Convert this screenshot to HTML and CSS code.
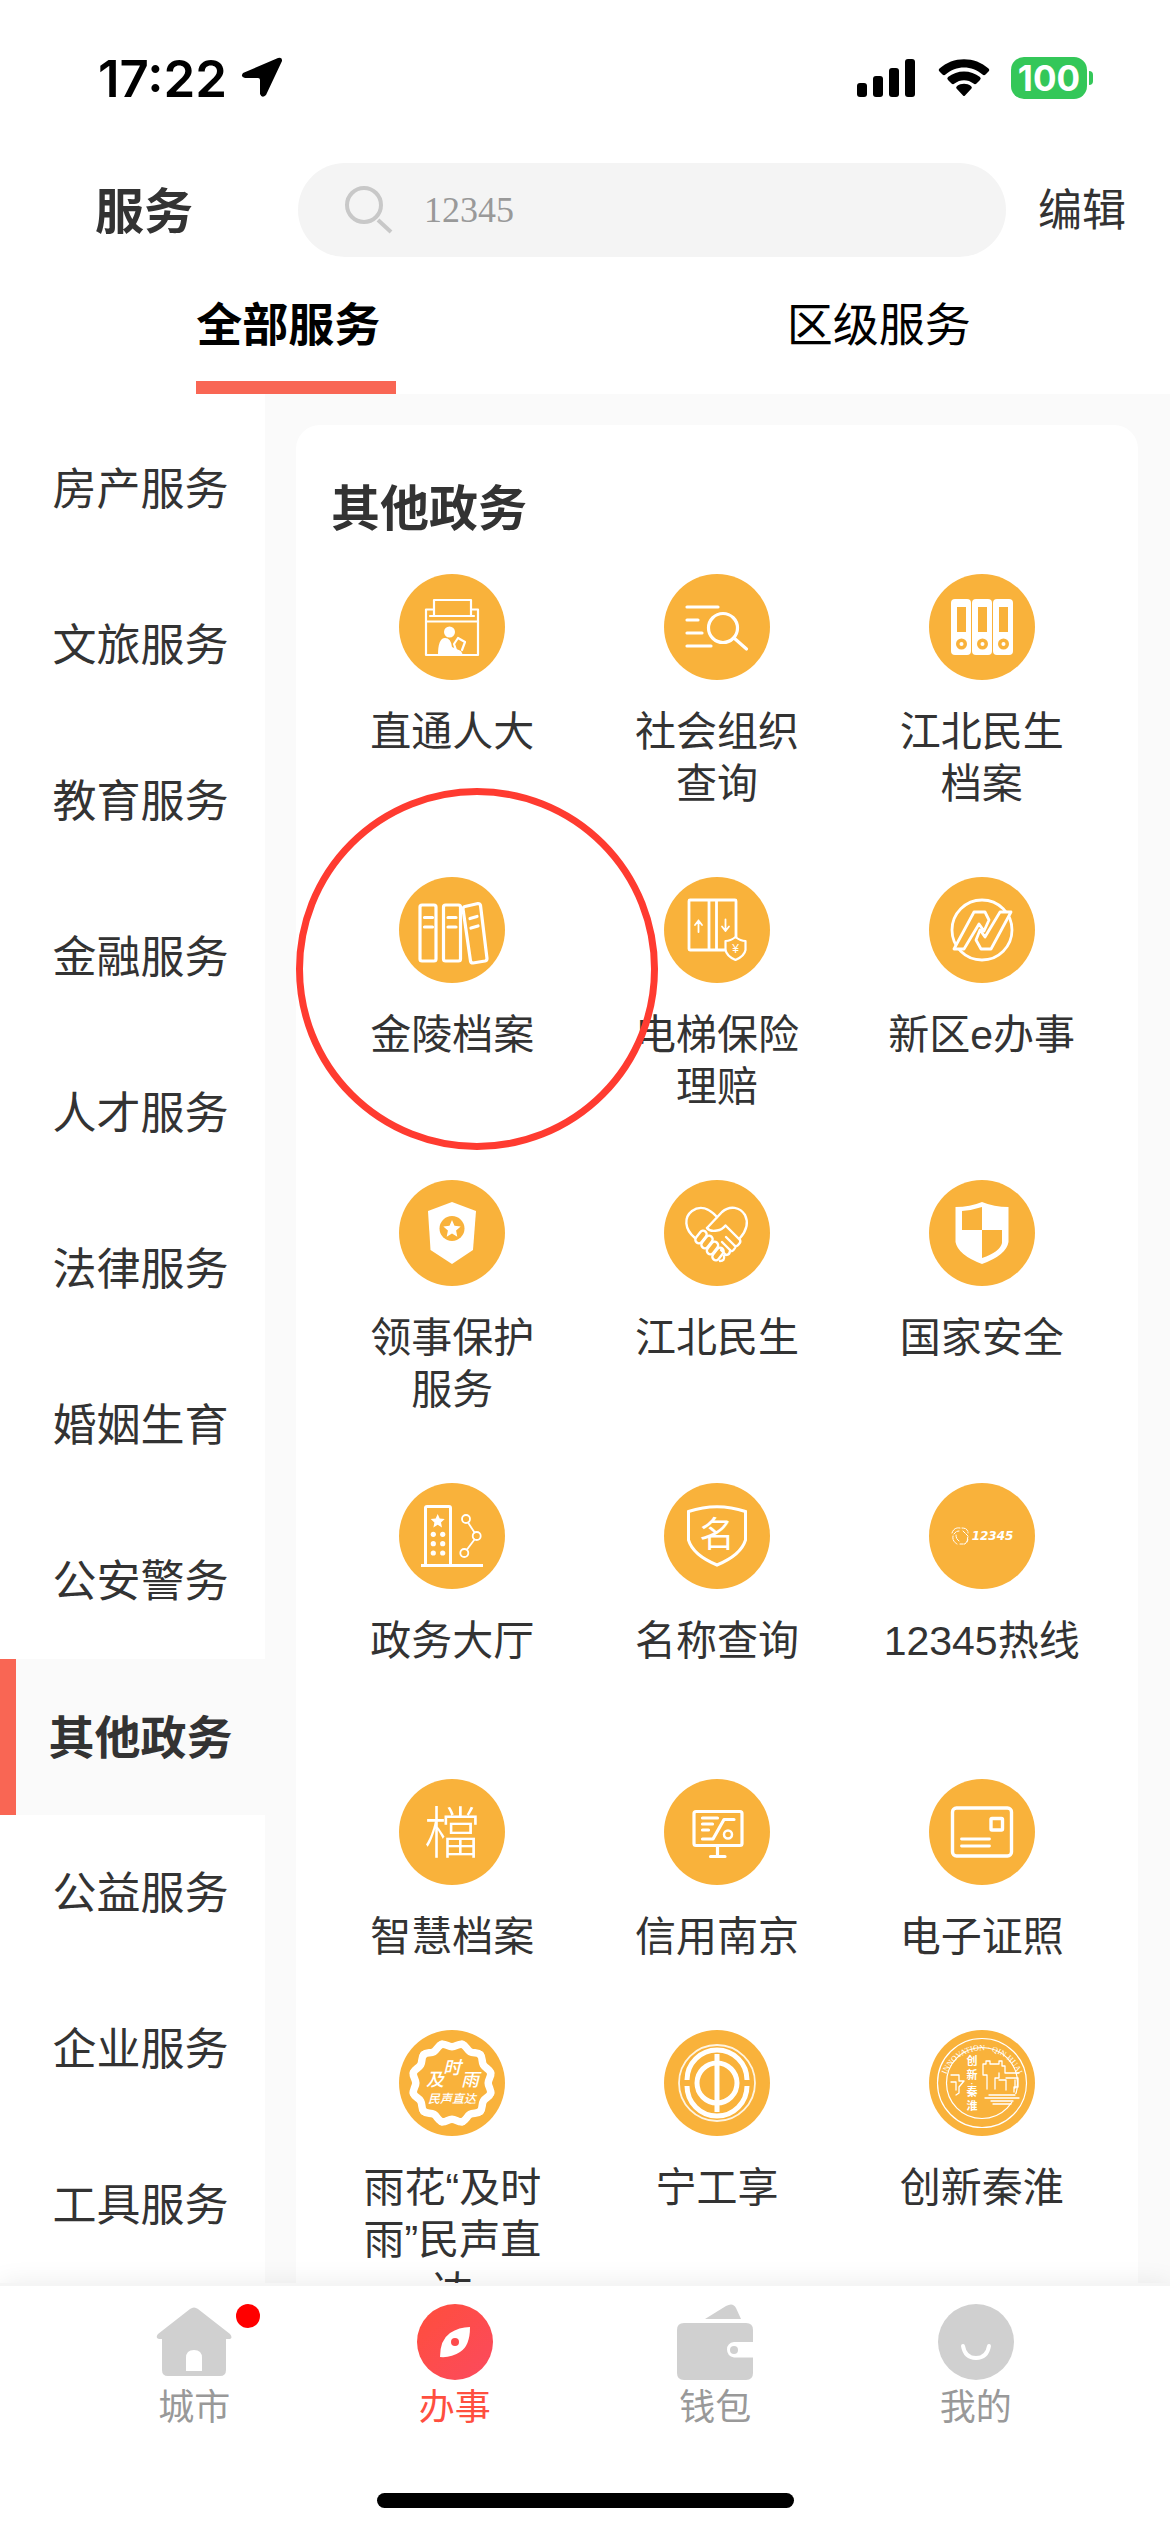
FILE: index.html
```html
<!DOCTYPE html>
<html lang="zh-CN">
<head>
<meta charset="UTF-8">
<meta name="viewport" content="width=device-width, initial-scale=1">
<title>服务</title>
<link rel="stylesheet" href="styles.css">
</head>
<body>

<div class="statusbar">
	<span class="time">17:22</span>
	<svg class="location" width="42" height="42" viewBox="0 0 42 42"><path d="M37 1Q41.500-.5 41 4L25 38Q21 42 19 37V23Q19 21 17 21H4Q-1 20 2 16z"/></svg>
	<div class="indicators">
		<svg width="60" height="38" viewBox="0 0 60 38"><rect y="24" width="10" height="14" rx="3"/><rect x="16" y="17" width="10" height="21" rx="3"/><rect x="32" y="9" width="10" height="29" rx="3"/><rect x="48" width="10" height="38" rx="3"/></svg>
		<svg width="52" height="38" viewBox="0 0 52 38"><path d="M1.500 12.500Q0 11 1.500 9.500C15-3 37-3 50.500 9.500Q52 11 50.500 12.500L47.500 15.500Q46 17 44.500 15.500C34 6 18 6 7.500 15.500Q6 17 4.500 15.500z"/><path d="M10 21Q8.500 19.500 10 18C19 10.500 33 10.500 42 18Q43.500 19.500 42 21L38.500 24.500Q37 26 35.500 24.500C30 20 22 20 16.500 24.500Q15 26 13.500 24.500z"/><path d="M18.500 29.500Q17.500 28.500 19 27C23 24 29 24 33 27Q34.500 28.500 33.500 29.500L27 36.500Q26 37.500 25 36.500z"/></svg>
		<div class="battery"><span>100</span></div>
	</div>
</div>

<header class="header">
	<h1>服务</h1>
	<label class="search">
		<svg width="50" height="50" viewBox="0 0 50 50"><circle cx="20" cy="20" r="17"/><path d="M34 35L47 47"/></svg>
		<input type="text" placeholder="12345" aria-label="搜索">
	</label>
	<button type="button" class="edit">编辑</button>
</header>

<nav class="tabs">
	<div><button type="button" class="active">全部服务</button></div>
	<div><button type="button">区级服务</button></div>
</nav>

<div class="content">
	<nav class="sidebar">
		<a href="#">房产服务</a>
		<a href="#">文旅服务</a>
		<a href="#">教育服务</a>
		<a href="#">金融服务</a>
		<a href="#">人才服务</a>
		<a href="#">法律服务</a>
		<a href="#">婚姻生育</a>
		<a href="#">公安警务</a>
		<a href="#" class="active">其他政务</a>
		<a href="#">公益服务</a>
		<a href="#">企业服务</a>
		<a href="#">工具服务</a>
	</nav>

	<main class="card">
		<h2>其他政务</h2>
		<div class="services">

			<a href="#" class="service">
				<svg viewBox="0 0 106 106"><g stroke-width="2.200"><path d="M35 42V26h37v16M31 42h44M34 35.500h-7V81h52V35.500h-7M27 47.500h52"/><path d="M57 76l-2-6 4-6 7 4-3 8"/></g><g class="solid"><circle cx="50.500" cy="58" r="5.500"/><path d="M39 81q0-17 7-17 6 0 7 9l9 4 2 4z"/></g></svg>
				<span>直通人大</span>
			</a>
			<a href="#" class="service">
				<svg viewBox="0 0 106 106"><g stroke-width="3.200"><path d="M23 33h31M23 46h11M23 59h15M23 72h24"/><circle cx="59" cy="54" r="14.500"/><path d="M70 64l12.500 11"/></g></svg>
				<span>社会组织查询</span>
			</a>
			<a href="#" class="service">
				<svg viewBox="0 0 106 106"><g class="solid"><rect x="22" y="25" width="20" height="56" rx="4"/><rect x="43" y="25" width="20" height="56" rx="4"/><rect x="64" y="25" width="20" height="56" rx="4"/></g><g class="hole"><path d="M28 33h9v25h-9zM49 33h9v25h-9zM70 33h9v25h-9z"/><circle cx="32.500" cy="70" r="5.500"/><circle cx="53.500" cy="70" r="5.500"/><circle cx="74.500" cy="70" r="5.500"/></g><g class="solid"><circle cx="32.500" cy="70" r="2"/><circle cx="53.500" cy="70" r="2"/><circle cx="74.500" cy="70" r="2"/></g></svg>
				<span>江北民生档案</span>
			</a>

			<a href="#" class="service marked">
				<svg viewBox="0 0 106 106"><g stroke-width="3.200"><rect x="21" y="28" width="16" height="56" rx="2"/><rect x="44.500" y="28" width="17" height="56" rx="2"/><path d="M66 29.500l13-3q2 0 2.500 2l6.500 53q0 2-2 2.500l-12 2q-2 0-2.500-2L64 32q0-2 2-2.500z"/><path d="M25.500 40.500h8M25.500 50h8M49 40.500h8M49 50h8M71 41.500l7-2M72 51l7-2"/></g></svg>
				<span>金陵档案</span>
			</a>
			<a href="#" class="service">
				<svg viewBox="0 0 106 106"><g stroke-width="2.800"><path d="M61 73H26q-1 0-1-1V24q0-1 1-1h45q1 0 1 1v36M45 23v50M52.500 23v50"/></g><g stroke-width="1.800"><path d="M34.500 55V43.500M31 48l3.500-4.500L38 48M61.500 42.500V54M58 49.500l3.500 4.500 3.500-4.500"/></g><path stroke-width="2.200" d="M71.500 60q5 4 10 4v9q-1 6-10 10-9-4-10-10v-9q5 0 10-4z"/><text x="71.500" y="76" font-size="12">¥</text></svg>
				<span>电梯保险理赔</span>
			</a>
			<a href="#" class="service">
				<svg viewBox="0 0 106 106"><g stroke-width="2.800"><circle cx="53" cy="53" r="30"/></g><path class="hole" d="M25 72L45 35h10l27 0-20 37z"/><g stroke-width="2.800"><path d="M25 72L45 35h11l4 8-5 11-5-7L35 72zM82 35L62 72H52l-5-9 4-10 5 7L71 35z"/></g></svg>
				<span>新区e办事</span>
			</a>

			<a href="#" class="service">
				<svg viewBox="0 0 106 106"><path class="solid" d="M53 22l24 9-3 39-21 14-21.500-14L29 31z"/><circle class="hole" cx="53" cy="48.500" r="12.500"/><path class="solid" d="M53 40l2.500 5.700 6.200.7-4.600 4.200 1.200 6.100-5.300-3.100-5.300 3.100 1.200-6.100-4.600-4.200 6.200-.7z"/></svg>
				<span>领事保护服务</span>
			</a>
			<a href="#" class="service">
				<svg viewBox="0 0 106 106"><g stroke-width="2.400"><path d="M31 58C20 49 20 37 28 31C36 25 45 28 53 37"/><path d="M43 48L58 32C66 25 76 27 81 35C85 43 83 50 76 58"/><path d="M43 48Q46 52 53 50.500Q58 50 61.500 45.500L76 60"/><rect x="-7" y="-3.500" width="14" height="7" rx="3.500" transform="translate(37 57) rotate(-52)"/><rect x="-7" y="-3.500" width="14" height="7" rx="3.500" transform="translate(43 62) rotate(-52)"/><rect x="-7" y="-3.500" width="14" height="7" rx="3.500" transform="translate(48.500 68) rotate(-52)"/><rect x="-7" y="-3.500" width="14" height="7" rx="3.500" transform="translate(54 74) rotate(-52)"/><path d="M62 57l8 8q2 3 5-1 2-2 1-4M58 62l8 8q2 3 5-2M57 70l5 5q4 0 4-5M60 76q1 5-4 5"/></g></svg>
				<span>江北民生</span>
			</a>
			<a href="#" class="service">
				<svg viewBox="0 0 106 106"><path class="solid" d="M53 22q12 5 26.500 5v35q-2 13-26.500 22Q29 75 26.500 62V27Q41 27 53 22z"/><path class="hole" d="M53 27v23H33V31q11-1 20-4zM53 50h20v13q-2 9-20 15z"/></svg>
				<span>国家安全</span>
			</a>

			<a href="#" class="service spaced">
				<svg viewBox="0 0 106 106"><g stroke-width="3"><path d="M26.500 82V25q0-1.500 1.500-1.500h22q1.500 0 1.500 1.500v57"/><path stroke-linecap="butt" d="M22 82.500h62"/></g><g stroke-width="1.800"><circle cx="67" cy="36" r="4"/><circle cx="77.700" cy="53" r="4"/><circle cx="65.300" cy="70" r="4"/><path d="M69 39.500l6.500 10M75.500 56.500L68 66.500"/></g><g class="solid"><path d="M38.700 31l2 4.500 5 .5-3.700 3.400 1 5-4.300-2.600-4.300 2.600 1-5-3.700-3.400 5-.5z"/><circle cx="34.300" cy="51.300" r="2.600"/><circle cx="43.700" cy="51.300" r="2.600"/><circle cx="34.300" cy="60.700" r="2.600"/><circle cx="43.700" cy="60.700" r="2.600"/><circle cx="34.300" cy="70" r="2.600"/><circle cx="43.700" cy="70" r="2.600"/></g></svg>
				<span>政务大厅</span>
			</a>
			<a href="#" class="service spaced">
				<svg viewBox="0 0 106 106"><path stroke-width="3" stroke-linejoin="miter" d="M24.500 28.500Q53 19 81.500 28.500V57Q77 72 53 82Q29 72 24.500 57z"/><text x="53" y="64" font-size="35">名</text></svg>
				<span>名称查询</span>
			</a>
			<a href="#" class="service spaced">
				<svg viewBox="0 0 106 106"><g stroke-width="1" stroke-dasharray="3 1"><path d="M23 50q2-6 8-5M25 51q2-3 5-3M33 45q6 0 6 5M34 48l5 5-1 6M24 53q-1 5 4 8M27 52q0 4 3 6M31 61h5l3-4"/></g><text x="63.500" y="57" font-size="12" class="logotype">12345</text></svg>
				<span>12345热线</span>
			</a>

			<a href="#" class="service">
				<svg viewBox="0 0 106 106"><text x="53" y="74" font-size="56" class="seal">檔</text></svg>
				<span>智慧档案</span>
			</a>
			<a href="#" class="service">
				<svg viewBox="0 0 106 106"><g stroke-width="3.200"><rect x="30" y="32.500" width="48" height="34" rx="2"/><path d="M53.500 67v10M46.500 77.500h14.500M38.500 39h15M38.500 45h10M38.500 51h6M38.500 60H49L60 40.500h10"/><circle cx="64" cy="55.500" r="4" stroke-width="2.500"/></g></svg>
				<span>信用南京</span>
			</a>
			<a href="#" class="service">
				<svg viewBox="0 0 106 106"><g stroke-width="3.400"><rect x="23.500" y="29" width="59" height="48" rx="4"/><rect x="62" y="39.500" width="11.500" height="11.500" rx="1"/><path stroke-width="2.800" d="M32.500 60h28M32.500 67h28"/></g></svg>
				<span>电子证照</span>
			</a>

			<a href="#" class="service">
				<svg viewBox="0 0 106 106">
					<defs><path id="wave" d="M-10.400-38.600C-6.500-39.600-4-36.200 0-36.200S6.500-39.600 10.400-38.600"/></defs>
					<g stroke-width="7.500" transform="translate(53 53)"><use href="#wave"/><use href="#wave" transform="rotate(30)"/><use href="#wave" transform="rotate(60)"/><use href="#wave" transform="rotate(90)"/><use href="#wave" transform="rotate(120)"/><use href="#wave" transform="rotate(150)"/><use href="#wave" transform="rotate(180)"/><use href="#wave" transform="rotate(210)"/><use href="#wave" transform="rotate(240)"/><use href="#wave" transform="rotate(270)"/><use href="#wave" transform="rotate(300)"/><use href="#wave" transform="rotate(330)"/></g>
					<g class="brush"><text x="36" y="56" font-size="18">及</text><text x="53" y="44" font-size="18">时</text><text x="71" y="56" font-size="18">雨</text><text x="53" y="73" font-size="12">民声直达</text></g>
				</svg>
				<span>雨花“及时雨”民声直达</span>
			</a>
			<a href="#" class="service">
				<svg viewBox="0 0 106 106"><g stroke-linecap="butt"><circle cx="53" cy="53" r="38" stroke-width="1.800" opacity=".85"/><path stroke-width="5" d="M23 50A30 30 0 0 1 83 50M23 56A30 30 0 0 0 83 56"/><circle cx="53" cy="53" r="20" stroke-width="5"/><path stroke-width="5" d="M53 24v58"/></g></svg>
				<span>宁工享</span>
			</a>
			<a href="#" class="service">
				<svg viewBox="0 0 106 106">
					<defs><path id="arc" d="M14.700 56A38.500 38.500 0 0 1 91.500 56"/></defs>
					<g stroke-width="1.200"><circle cx="53" cy="53" r="44.500"/><circle cx="53" cy="53" r="35.500"/></g>
					<text class="motto" font-size="8"><textPath href="#arc" startOffset="50%">INNOVATION · QIN HUAI</textPath></text>
					<rect class="hole" x="36" y="24" width="14" height="58"/><path class="hole" d="M57 64h34v8H57z"/>
					<g stroke-width="1.300"><path d="M58 59V45h-4V34h3v-3h4v3h9v-3h3v5h3v7h14M70 43v5h-4v11M77 60V50h-7M77 48h12v9h-4v5M86 50v8M22 45h8v6h5l-5 6v6l-3 2M22 52h5v8M56 68h34M60 65h26M62 71h22M64 74h18"/></g>
					<g class="brush-upright"><text x="43" y="35" font-size="11">创</text><text x="43" y="49" font-size="11">新</text><text x="43" y="56" font-size="8">·</text><text x="43" y="66" font-size="11">秦</text><text x="43" y="80" font-size="11">淮</text></g>
				</svg>
				<span>创新秦淮</span>
			</a>

		</div>
	</main>
</div>

<footer class="tabbar">
	<nav>
		<a href="#">
			<svg width="76" height="76" viewBox="0 0 76 76"><path d="M34 5q4-3 8 0l32 25q3 4 0 5h-4v31q0 6-6 6H12q-6 0-6-6V35H3q-4-1-1-5z"/><path class="cut" d="M30 67V54q0-8 8-8t8 8v13z"/></svg>
			<span>城市</span>
			<i class="dot"></i>
		</a>
		<a href="#" class="active">
			<svg width="76" height="76" viewBox="0 0 76 76"><defs><linearGradient id="red" x1="0" y1="0" x2="1" y2="1"><stop offset="0" stop-color="#ff4e3c"/><stop offset="1" stop-color="#fb4a5e"/></linearGradient></defs><circle cx="38" cy="38" r="38" fill="url(#red)"/><path class="cut" d="M53 23Q53 42 43 48Q34 54 23 53Q23 36 33 29Q42 23 53 23z"/><circle cx="38" cy="38" r="4" fill="#fd4b4c"/></svg>
			<span>办事</span>
		</a>
		<a href="#">
			<svg width="76" height="76" viewBox="0 0 76 76"><path d="M28 15L49 2q7-4 10 2l5 11zM7 19h62q7 0 7 7v43q0 7-7 7H7q-7 0-7-7V26q0-7 7-7z"/><path class="cut" d="M76 38H57q-7 1-7 7.500t7 8h19z"/><circle cx="57" cy="46" r="4"/></svg>
			<span>钱包</span>
		</a>
		<a href="#">
			<svg width="76" height="76" viewBox="0 0 76 76"><circle cx="38" cy="38" r="38"/><path d="M25 42q2 12 13 12t13-12" fill="none" stroke="#fff" stroke-width="4" stroke-linecap="round"/></svg>
			<span>我的</span>
		</a>
	</nav>
	<div class="home-indicator"></div>
</footer>

</body>
</html>
```

FILE: styles.css
```css
*, *::after {
	box-sizing: border-box;
}
html, body {
	height: 100%;
	margin: 0;
}
body {
	display: flex;
	flex-direction: column;
	background: #fff;
	color: #333;
	font-family: "Liberation Sans", "Noto Sans CJK SC", sans-serif;
}
a {
	color: inherit;
	text-decoration: none;
}
button {
	padding: 0;
	border: 0;
	background: none;
	color: inherit;
	font-family: inherit;
	white-space: nowrap;
}
h1, h2 {
	margin: 0;
	font-size: 49px;
	font-weight: 700;
}

/* status bar */
.statusbar {
	display: flex;
	flex: none;
	align-items: center;
	height: 163px;
	padding: 0 76px 7px 98px;
	color: #000;
}
.time {
	margin-right: 14px;
	font-family: Inter, sans-serif;
	font-size: 51px;
	font-weight: 600;
}
.indicators {
	display: flex;
	align-items: center;
	gap: 21px;
	margin-left: auto;
}
.battery {
	position: relative;
	width: 76px;
	height: 42px;
	margin-right: 7px;
	border-radius: 13px;
	background: #34c759;
	color: #fff;
	font: 700 35px/42px Inter, sans-serif;
	text-align: center;
}
.battery::after {
	content: "";
	position: absolute;
	left: 78px;
	top: 14px;
	width: 4px;
	height: 14px;
	border-radius: 0 4px 4px 0;
	background: #34c759;
}

/* header */
.header {
	display: flex;
	flex: none;
	align-items: center;
	padding: 0 44px 0 95px;
}
.header h1, .edit {
	padding-bottom: 6px;
}
.search {
	display: flex;
	flex: 1;
	align-items: center;
	gap: 30px;
	height: 94px;
	margin: 0 32px 0 105px;
	padding: 0 46px;
	border-radius: 47px;
	background: #f4f4f4;
}
.search svg {
	fill: none;
	stroke: #c8c8c8;
	stroke-width: 4;
}
.search input {
	flex: 1;
	min-width: 0;
	padding: 0;
	border: 0;
	outline: 0;
	background: none;
	font: 36px "Liberation Serif", serif;
}
.search input::placeholder {
	color: #999;
}
.edit {
	font-size: 44px;
}

.tabs {
	display: flex;
	flex: none;
	height: 137px;
	padding-left: 5px;
	color: #000;
}
.tabs div {
	display: flex;
	flex: 1;
	justify-content: center;
}
.tabs button {
	padding-top: 4px;
	border-bottom: 13px solid transparent;
	font-size: 46px;
}
.tabs .active {
	padding-right: 16px;
	border-color: #f96654;
	font-weight: 700;
}

/* category list and services */
.content {
	display: flex;
	flex: 1;
	min-height: 0;
	overflow: hidden;
	background: #fafafa;
}
.sidebar {
	flex: none;
	width: 265px;
	padding-top: 17px;
	background: #fff;
}
.sidebar a {
	display: flex;
	align-items: center;
	justify-content: center;
	height: 156px;
	padding-bottom: 6px;
	border-left: 16px solid transparent;
	font-size: 44px;
}
.sidebar .active {
	border-color: #f96654;
	background: #fafafa;
	font-size: 46px;
	font-weight: 700;
}
.card {
	flex: 1;
	margin: 31px 32px 0 31px;
	padding: 48px 24px 0;
	border-radius: 24px 24px 0 0;
	background: #fff;
}
.card h2 {
	padding-left: 11px;
	line-height: 72px;
}
.services {
	display: grid;
	grid-template-columns: repeat(3, 1fr);
	row-gap: 67px;
	padding-top: 29px;
}
.service {
	position: relative;
	display: flex;
	flex-direction: column;
	align-items: center;
	gap: 26px;
}
.service span {
	max-width: 200px;
	font-size: 41px;
	line-height: 52px;
	text-align: center;
}
.spaced {
	margin-bottom: 45px;
}
.service svg {
	width: 106px;
	height: 106px;
	border-radius: 50%;
	background: #f9b23b;
	fill: none;
	stroke: #fff;
	stroke-linecap: round;
	stroke-linejoin: round;
}
.service text {
	fill: #fff;
	stroke: none;
	text-anchor: middle;
}
.service .solid {
	fill: #fff;
	stroke: none;
}
.service .hole {
	fill: #f9b23b;
	stroke: none;
}
.logotype {
	font-family: "DejaVu Sans", sans-serif;
	font-style: italic;
	font-weight: 700;
}
.seal {
	font-weight: 300;
}
.brush {
	font-style: italic;
	font-weight: 500;
}
.brush-upright {
	font-weight: 700;
}
.motto {
	font-family: "Liberation Serif", serif;
}
/* hand-drawn ring round a service */
.marked::after {
	content: "";
	position: absolute;
	z-index: 1;
	left: -24px;
	top: -89px;
	width: 362px;
	height: 362px;
	border: 7px solid #ff3b30;
	border-radius: 50%;
}

/* bottom bar */
.tabbar {
	position: relative;
	z-index: 2;
	flex: none;
	height: 249px;
	border-top: 3px solid #f5f5f5;
	background: #fff;
	box-shadow: 0 0 24px rgba(0, 0, 0, .08);
}
.tabbar nav {
	display: flex;
	padding: 18px 64px 0;
}
.tabbar a {
	position: relative;
	display: flex;
	flex: 1;
	flex-direction: column;
	align-items: center;
	gap: 2px;
	color: #999;
	font-size: 36px;
	line-height: 52px;
}
.tabbar .active {
	color: #ff4f3f;
}
.tabbar svg {
	fill: #d0d0d0;
}
.tabbar .cut {
	fill: #fff;
}
.dot {
	position: absolute;
	left: calc(50% + 42px);
	top: 0;
	width: 24px;
	height: 24px;
	border-radius: 50%;
	background: #f00;
}
.home-indicator {
	width: 417px;
	height: 15px;
	margin: 59px auto 0;
	border-radius: 8px;
	background: #000;
}
```
